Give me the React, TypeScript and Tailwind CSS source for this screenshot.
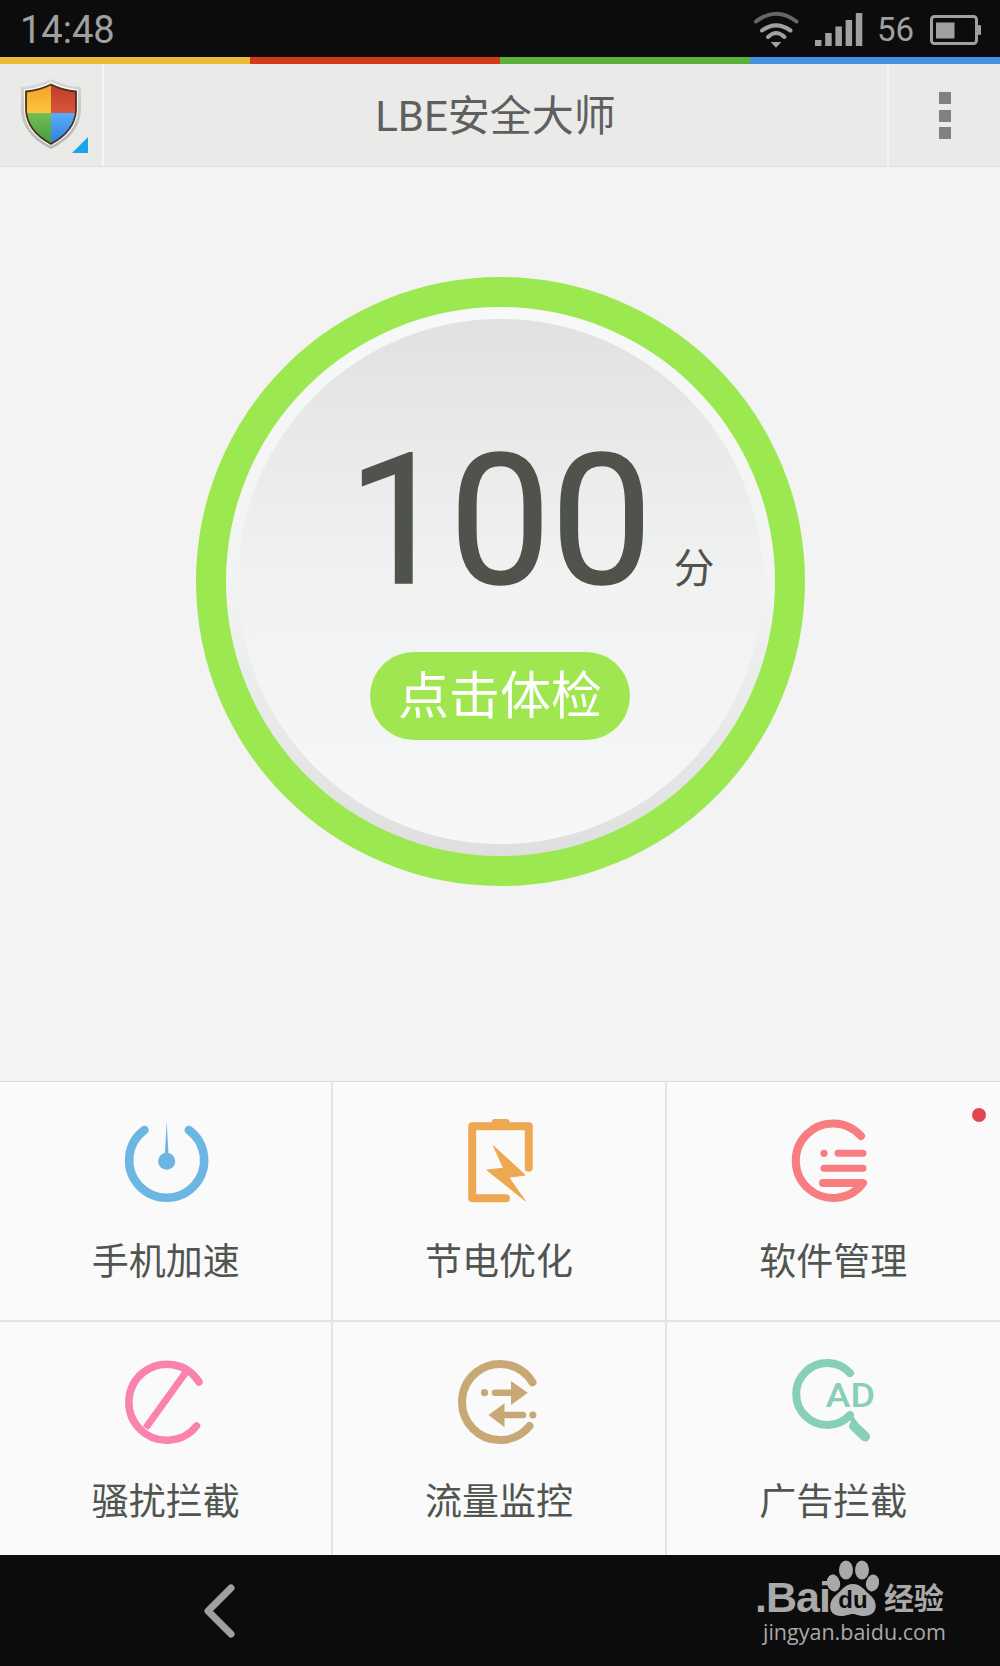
const shieldPath = "M30 5.5 Q42 11.5 55 12.5 L55 31 Q54 52 30 65 Q6 52 5 31 L5 12.5 Q18 11.5 30 5.5Z";

function Shield() {
  return (
    <svg width="60" height="70" viewBox="0 0 60 70">
      <defs>
        <clipPath id="shield-clip">
          <path d={shieldPath} />
        </clipPath>
        <linearGradient id="shield-edge" x1="0" y1="0" x2="0" y2="1">
          <stop offset="0" stopColor="#d8d8d4" />
          <stop offset="1" stopColor="#b5b5b3" />
        </linearGradient>
        <linearGradient id="shield-yellow" x1="0" y1="0" x2="0" y2="1">
          <stop offset="0" stopColor="#f09a24" />
          <stop offset="1" stopColor="#fdc63f" />
        </linearGradient>
        <linearGradient id="shield-red" x1="0" y1="0" x2="0" y2="1">
          <stop offset="0" stopColor="#b93a24" />
          <stop offset="1" stopColor="#d8553a" />
        </linearGradient>
        <linearGradient id="shield-green" x1="0" y1="0" x2="0" y2="1">
          <stop offset="0" stopColor="#78bd56" />
          <stop offset="1" stopColor="#389636" />
        </linearGradient>
        <linearGradient id="shield-blue" x1="0" y1="0" x2="0" y2="1">
          <stop offset="0" stopColor="#58aefb" />
          <stop offset="1" stopColor="#2a76d8" />
        </linearGradient>
      </defs>
      <path
        d="M30 0 Q44 7 60 8 L60 31 Q59 56 30 70 Q1 56 0 31 L0 8 Q16 7 30 0Z"
        fill="url(#shield-edge)"
      />
      <path
        d="M30 3 Q43 9 57 10.5 L57 31 Q56 54 30 67 Q4 54 3 31 L3 10.5 Q17 9 30 3Z"
        fill="#f7f7f5"
      />
      <g clipPath="url(#shield-clip)">
        <rect x="0" y="0" width="30" height="34" fill="url(#shield-yellow)" />
        <rect x="30" y="0" width="30" height="34" fill="url(#shield-red)" />
        <rect x="0" y="34" width="30" height="36" fill="url(#shield-green)" />
        <rect x="30" y="34" width="30" height="36" fill="url(#shield-blue)" />
      </g>
      <path d={shieldPath} fill="none" stroke="#4a3020" strokeWidth="1.8" />
    </svg>
  );
}

function WifiIcon() {
  return (
    <svg width="48" height="40" viewBox="0 0 48 40" fill="none">
      <path d="M4 11.5Q24 -4 44.5 11.5" stroke="#666" strokeWidth="4" strokeLinecap="round" />
      <path d="M10 20.5Q24 10.3 38.5 20.5" stroke="#a0a0a0" strokeWidth="4" strokeLinecap="round" />
      <path d="M16 27Q24 19 32.5 27" stroke="#a0a0a0" strokeWidth="4" strokeLinecap="round" />
      <path d="M18.7 32H29.3L24 37.7Z" fill="#a0a0a0" />
    </svg>
  );
}

function SignalIcon() {
  return (
    <svg width="48" height="33" viewBox="0 0 48 33" fill="#a0a0a0">
      <rect x="0" y="27" width="6.5" height="6" />
      <rect x="10.2" y="20" width="6.5" height="13" />
      <rect x="20.4" y="13.5" width="6.5" height="19.5" />
      <rect x="30.6" y="7" width="6.5" height="26" />
      <rect x="40.8" y="0" width="6.5" height="33" />
    </svg>
  );
}

function BatteryIcon() {
  return (
    <svg width="51" height="30" viewBox="0 0 51 30" fill="none">
      <rect x="1.5" y="1.5" width="45" height="27" rx="3" stroke="#a0a0a0" strokeWidth="3" />
      <rect x="6" y="7.5" width="18.5" height="16" fill="#a0a0a0" />
      <rect x="48" y="10" width="3" height="10" rx="1" fill="#a0a0a0" />
    </svg>
  );
}

function SpeedIcon() {
  return (
    <svg width="100" height="100" viewBox="0 0 100 100" fill="none">
      <path
        d="M28.5 25A37.5 37.5 0 1 0 72.8 25"
        stroke="#6cb6e3"
        strokeWidth="8.5"
        strokeLinecap="round"
      />
      <path d="M50.7 16.5L52.5 50H48.8Z" fill="#6cb6e3" />
      <circle cx="50.7" cy="56.3" r="8.5" fill="#6cb6e3" />
    </svg>
  );
}

function PowerIcon() {
  return (
    <svg width="100" height="100" viewBox="0 0 100 100" fill="none">
      <path
        d="M79.8 62.7V21.3H23.2V93.3H57"
        stroke="#eea851"
        strokeWidth="8"
        strokeLinecap="round"
        strokeLinejoin="round"
      />
      <rect x="42.8" y="14" width="17.7" height="6" rx="2.5" fill="#eea851" />
      <path
        d="M44.5 41L76.2 70L59.8 72.3L76.2 95.7L37.8 65L54.5 63.3Z"
        fill="#eea851"
        stroke="#eea851"
        strokeWidth="1"
        strokeLinejoin="round"
      />
    </svg>
  );
}

function AppsIcon() {
  return (
    <svg width="100" height="100" viewBox="0 0 100 100" fill="none">
      <g stroke="#f77d80" strokeLinecap="round">
        <path d="M78 31A37.3 37.3 0 1 0 80 78H40" strokeWidth="8" strokeLinejoin="round" />
        <path d="M55 48.3H80" strokeWidth="7" />
        <path d="M41 63.3H80" strokeWidth="7" />
      </g>
      <circle cx="41" cy="48.3" r="3.6" fill="#f77d80" />
    </svg>
  );
}

function BlockIcon() {
  return (
    <svg width="100" height="100" viewBox="0 0 100 100" fill="none">
      <path
        d="M83 37A38 38 0 1 0 80.5 81"
        stroke="#f982ae"
        strokeWidth="7.5"
        strokeLinecap="round"
      />
      <path d="M70 27L29.7 83" stroke="#f982ae" strokeWidth="7" />
    </svg>
  );
}

function TrafficIcon() {
  return (
    <svg width="100" height="100" viewBox="0 0 100 100" fill="none">
      <path
        d="M83.5 37.3A38 38 0 1 0 80.5 81"
        stroke="#c8a976"
        strokeWidth="8"
        strokeLinecap="round"
      />
      <circle cx="35.5" cy="47.7" r="3.6" fill="#c8a976" />
      <path d="M46 47.7H64" stroke="#c8a976" strokeWidth="6.5" strokeLinecap="round" />
      <path d="M62 36L78.8 47.7L62 60Z" fill="#c8a976" />
      <circle cx="83.8" cy="70" r="3.6" fill="#c8a976" />
      <path d="M54 70H74" stroke="#c8a976" strokeWidth="6.5" strokeLinecap="round" />
      <path d="M39.5 70L55.5 58.3V82.3Z" fill="#c8a976" />
    </svg>
  );
}

function AdIcon() {
  return (
    <svg width="100" height="100" viewBox="0 0 100 100" fill="none">
      <path
        d="M67 28A31 31 0 1 0 67 70"
        stroke="#87cfb9"
        strokeWidth="8"
        strokeLinecap="round"
      />
      <path d="M66 70L72 78" stroke="#87cfb9" strokeWidth="5" strokeLinecap="round" />
      <path d="M71 81L82 91.5" stroke="#87cfb9" strokeWidth="10" strokeLinecap="round" />
      <text
        x="42.5"
        y="62"
        fontSize="34"
        fontWeight="500"
        fontFamily="Roboto, sans-serif"
        fill="#87cfb9"
        textLength="49.5"
        lengthAdjust="spacingAndGlyphs"
      >
        AD
      </text>
    </svg>
  );
}

function Paw() {
  return (
    <svg width="52" height="56" viewBox="0 0 52 56">
      <g fill="#a9a9a9">
        <ellipse cx="19" cy="10" rx="7" ry="9.5" />
        <ellipse cx="35" cy="10" rx="7" ry="9.5" />
        <ellipse cx="6.5" cy="23" rx="6.5" ry="8.5" transform="rotate(-15 6.5 23)" />
        <ellipse cx="45.5" cy="23" rx="6.5" ry="8.5" transform="rotate(15 45.5 23)" />
        <path d="M26 24C34 24 37 30 43 35C51 41 52 56 37 56C31 56 29 54 26 54C22 54 20 56 14 56C0 56 1 41 9 35C15 30 18 24 26 24Z" />
      </g>
      <text
        x="26"
        y="48"
        textAnchor="middle"
        fontSize="24"
        fontWeight="700"
        fontFamily="'Liberation Sans', sans-serif"
        fill="#0c0c0c"
      >
        du
      </text>
    </svg>
  );
}

const tools = [
  { label: "手机加速", icon: <SpeedIcon /> },
  { label: "节电优化", icon: <PowerIcon /> },
  { label: "软件管理", icon: <AppsIcon />, dot: true },
  { label: "骚扰拦截", icon: <BlockIcon /> },
  { label: "流量监控", icon: <TrafficIcon /> },
  { label: "广告拦截", icon: <AdIcon /> },
];

export default function App() {
  return (
    <div className="flex h-[1666px] w-[1000px] flex-col overflow-hidden bg-[#f3f3f3] font-['Roboto','Noto_Sans_CJK_SC',sans-serif]">
      {/* status bar */}
      <div className="flex h-[57px] items-center bg-[#0c0c0c] pl-5 pt-[2px] text-[#a0a0a0]">
        <span className="text-[38px] leading-none">14:48</span>
        <div className="ml-auto flex items-center pr-[19px]">
          <WifiIcon />
          <div className="ml-[15px]">
            <SignalIcon />
          </div>
          <span className="ml-[14px] text-[33px] leading-none">56</span>
          <div className="ml-[16px]">
            <BatteryIcon />
          </div>
        </div>
      </div>

      {/* colour strip */}
      <div className="grid h-[7px] grid-cols-4">
        <div className="bg-[#ecb935]" />
        <div className="bg-[#d33a17]" />
        <div className="bg-[#5bb03a]" />
        <div className="bg-[#4490e0]" />
      </div>

      {/* header */}
      <div className="flex h-[103px] border-b border-[#dfdfdd] bg-[#eaeae8]">
        <div className="relative flex w-[104px] items-start border-r-2 border-[#f5f5f4] pl-[21px] pt-[15px]">
          <Shield />
          <div className="absolute left-[72px] top-[73px] h-4 w-4 bg-[#1aa6e8] [clip-path:polygon(100%_0,100%_100%,0_100%)]" />
        </div>
        <div className="flex flex-1 items-center justify-center pt-[3px] text-[42px] leading-none text-[#5f5f5f]">
          LBE安全大师
        </div>
        <div className="flex w-[113px] flex-col items-center justify-center gap-[5.5px] border-l-2 border-[#f5f5f4] pt-[1px]">
          <div className="h-3 w-3 bg-[#808080]" />
          <div className="h-3 w-3 bg-[#808080]" />
          <div className="h-3 w-3 bg-[#808080]" />
        </div>
      </div>

      {/* score */}
      <div className="flex flex-1 justify-center pt-[110px]">
        <div className="h-[609px] w-[609px] rounded-full bg-[#9ce850] p-[30px]">
          <div className="h-full w-full rounded-full bg-linear-to-b from-[#f6f9f7] via-[#f2f4f3] to-[#dfdfdf] p-[12px]">
            <div className="flex h-full w-full flex-col items-center rounded-full bg-linear-to-b from-[#e1e1e1] via-[#f1f3f2] to-[#f6f8f7] pt-[112px]">
              <div className="flex items-baseline text-[#4f534c]">
                <span className="text-[181px] leading-none [-webkit-text-stroke:1.5px_#4f534c]">100</span>
                <span className="-mr-[62px] ml-[21px] text-[41px] leading-none">分</span>
              </div>
              <button className="mt-[40px] flex h-[88px] w-[260px] items-center justify-center rounded-full bg-[#9fe651] text-[51px] leading-none text-white">
                点击体检
              </button>
            </div>
          </div>
        </div>
      </div>

      {/* tools */}
      <div className="grid grid-cols-3 grid-rows-[240px_233px] border-t border-[#dcdcdc] bg-[#fafafa]">
        {tools.map((tool, i) => (
          <div
            key={tool.label}
            className={`relative flex flex-col items-center pt-[23px] ${
              i % 3 !== 2 ? "border-r-2 border-[#e4e4e4]" : ""
            } ${i < 3 ? "border-b-2 border-[#e4e4e4]" : ""}`}
          >
            {tool.icon}
            <span className="mt-[39px] text-[37px] leading-none text-[#505550]">
              {tool.label}
            </span>
            {tool.dot && (
              <div className="absolute right-[14px] top-[26px] h-[14px] w-[14px] rounded-full bg-[#e0474f]" />
            )}
          </div>
        ))}
      </div>

      {/* bottom bar */}
      <div className="relative flex h-[111px] items-center bg-[#0c0c0c] pl-[203px]">
        <svg width="32" height="54" viewBox="0 0 32 54" fill="none">
          <path
            d="M28 4L5 27L28 50"
            stroke="#a0a0a0"
            strokeWidth="7"
            strokeLinecap="round"
            strokeLinejoin="round"
          />
        </svg>
        {/* watermark */}
        <div className="absolute left-[755px] top-[5px] flex flex-col items-start text-[#a9a9a9]">
          <div className="flex items-end">
            <span className="font-['Liberation_Sans',sans-serif] text-[43px] font-bold leading-[38px] tracking-[-1px]">
              .Bai
            </span>
            <div className="-ml-[3px]">
              <Paw />
            </div>
            <span className="ml-[5px] text-[30px] font-bold leading-[34px]">经验</span>
          </div>
          <span className="ml-[8px] mt-[5px] font-['Open_Sans',sans-serif] text-[21.5px] leading-none">
            jingyan.baidu.com
          </span>
        </div>
      </div>
    </div>
  );
}
